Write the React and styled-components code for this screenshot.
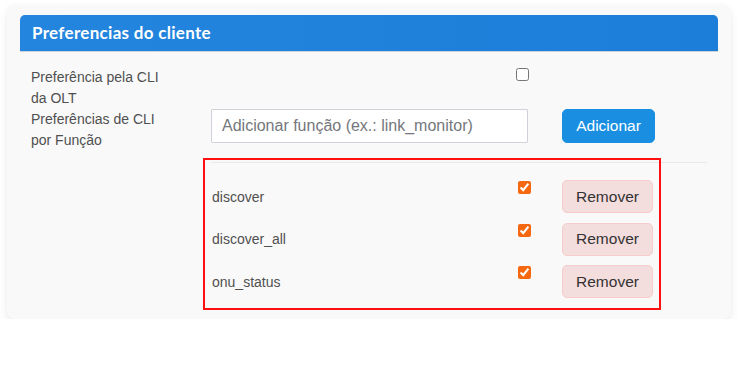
import React from "react";
import styled, { createGlobalStyle } from "styled-components";

const Global = createGlobalStyle`
  html, body { margin: 0; padding: 0; background: #ffffff; }
  body { font-family: "Liberation Sans", Arial, sans-serif; }
  * { box-sizing: border-box; }
`;

const Card = styled.section`
  margin: 5px 13px 0 7px;
  padding: 10px 13px 0;
  background: #f9f9f9;
  border-radius: 8px;
  box-shadow: 0 4px 10px rgba(0, 0, 0, 0.08), 0 0 3px rgba(0, 0, 0, 0.03);
`;

const Header = styled.header`
  height: 37px;
  display: flex;
  align-items: center;
  padding: 0 12px 1px;
  background: linear-gradient(to right, #2385de, #1c7ed8);
  border-bottom: 1px solid #cfd3d8;
  border-radius: 5px 5px 0 0;
`;

const Title = styled.h2`
  margin: 0;
  font-family: Lato, "Open Sans", sans-serif;
  font-weight: 700;
  font-size: 17px;
  color: #ffffff;
  letter-spacing: 0.3px;
`;

const Body = styled.div`
  display: grid;
  grid-template-columns: 180px 1fr;
  padding: 15px 11px 17px 11px;
`;

const Label = styled.div`
  width: 140px;
  font-size: 14px;
  line-height: 21px;
  color: #505050;
`;

const Cell = styled.div`
  display: flex;
  align-items: flex-start;
  min-height: 42px;
`;

const Check = styled.input.attrs({ type: "checkbox" })`
  width: 13px;
  height: 13px;
  margin: ${(p) => p.$mt || 0}px 0 0 ${(p) => p.$ml || 0}px;
  accent-color: #f5680f;
  flex: none;
`;

const InputGroup = styled.div`
  display: flex;
  gap: 34px;
`;

const TextInput = styled.input`
  width: 317px;
  height: 34px;
  padding: 0 10px;
  border: 1px solid #cfd3d9;
  border-radius: 1px;
  background: #ffffff;
  font-family: "Liberation Sans", Arial, sans-serif;
  font-size: 16px;
  color: #333;
  &::placeholder { color: #74777b; }
`;

const Button = styled.button`
  height: ${(p) => p.$h}px;
  width: ${(p) => p.$w}px;
  padding: 0;
  border-radius: 5px;
  font-family: "Liberation Sans", Arial, sans-serif;
  font-size: 15.5px;
  cursor: pointer;
  background: ${(p) => (p.$danger ? "#f4dddd" : "#1a8fe2")};
  border: 1px solid ${(p) => (p.$danger ? "#f6cccc" : "#1a8fe2")};
  color: ${(p) => (p.$danger ? "#333333" : "#ffffff")};
`;

const ListWrap = styled.div`
  grid-column: 2;
  margin-top: 11px;
  border-top: 1px solid #e9e9e9;
`;

const List = styled.div`
  width: 442px;
  margin-top: 3px;
  padding: 14px 0 4px;
  outline: 2px solid #ff1010;
  outline-offset: 6px;
  display: flex;
  flex-direction: column;
  gap: 9.5px;
`;

const Row = styled.div`
  display: grid;
  grid-template-columns: 307px 13px 31px 91px;
  align-items: center;
  height: 33px;
`;

const Name = styled.span`
  padding-left: 1px;
  font-size: 14px;
  color: #505050;
`;

const CheckCell = styled.div`
  align-self: start;
  padding-top: 1px;
  display: flex;
`;

const items = ["discover", "discover_all", "onu_status"];

export default function App() {
  return (
    <>
      <Global />
      <Card>
        <Header>
          <Title>Preferencias do cliente</Title>
        </Header>
        <Body>
          <Label>Preferência pela CLI da OLT</Label>
          <Cell>
            <Check $ml={305} $mt={1} />
          </Cell>
          <Label>Preferências de CLI por Função</Label>
          <Cell>
            <InputGroup>
              <TextInput placeholder="Adicionar função (ex.: link_monitor)" />
              <Button $w={93} $h={34}>Adicionar</Button>
            </InputGroup>
          </Cell>
          <ListWrap>
            <List>
              {items.map((it) => (
                <Row key={it}>
                  <Name>{it}</Name>
                  <CheckCell>
                    <Check defaultChecked />
                  </CheckCell>
                  <span />
                  <Button $danger $w={91} $h={33}>
                    Remover
                  </Button>
                </Row>
              ))}
            </List>
          </ListWrap>
        </Body>
      </Card>
    </>
  );
}
